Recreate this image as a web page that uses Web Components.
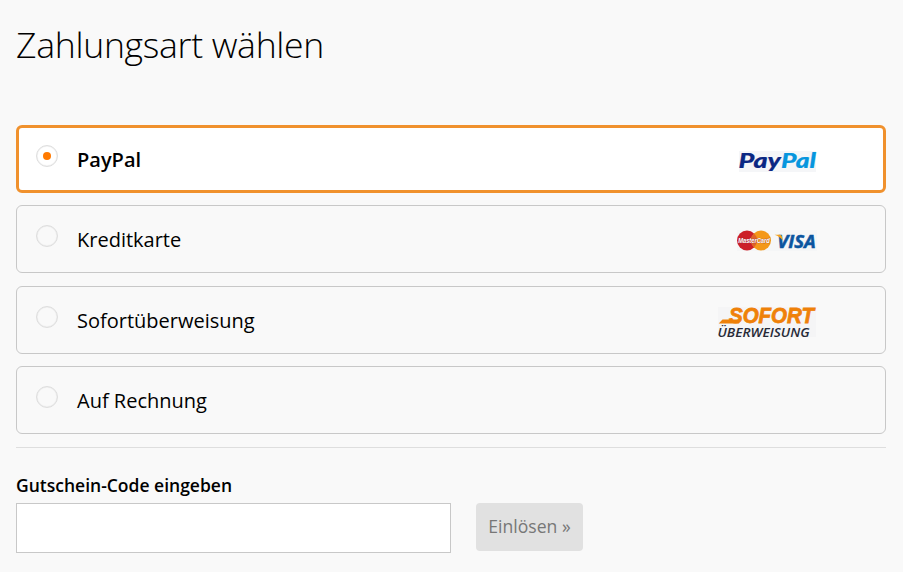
<!DOCTYPE html>
<html lang="de">
<head>
<meta charset="utf-8">
<title>Zahlungsart wählen</title>
<style>
html,body{margin:0;height:100%;background:#f9f9f9;overflow:hidden}
body{font-family:"Open Sans","Noto Sans",sans-serif;color:#000}
</style>
</head>
<body>
<payment-page></payment-page>
<script>
const shadow = (el, html) => { el.attachShadow({mode:"open"}).innerHTML = html; };

const logos = {
  paypal: `<svg width="99" height="32" viewBox="718 145 99 32">
    <path fill="#f5f6f8" d="M739 151h77v21h-77z"/>
    <g font-family="Lato,sans-serif" font-weight="900" font-style="italic" font-size="21.7" stroke-width=".2">
    <text x="738.5" y="168" fill="#0a2783" stroke="#0a2783" textLength="42.5" lengthAdjust="spacingAndGlyphs">Pay</text>
    <text x="781" y="168" fill="#0796de" stroke="#0796de" textLength="35" lengthAdjust="spacingAndGlyphs">Pal</text></g></svg>`,
  card: `<svg width="99" height="32" viewBox="718 225 99 32">
    <path fill="#f5f6f7" d="M737 230h80v21h-80z"/>
    <circle cx="747" cy="240.5" r="10" fill="#cc1f28"/>
    <circle cx="761" cy="240.5" r="10" fill="#f49819"/>
    <path d="M754 233.3a10 10 0 0 1 0 14.4a10 10 0 0 1 0-14.4z" fill="#df642a"/>
    <text x="738.2" y="243.3" fill="#fff" stroke="#983038" stroke-width=".5" paint-order="stroke" font-family="Liberation Sans,sans-serif" font-weight="700" font-style="italic" font-size="7.8" textLength="31.5" lengthAdjust="spacingAndGlyphs">MasterCard</text>
    <text x="777.2" y="247.6" fill="#0b559f" stroke="#0b559f" stroke-width=".5" font-family="Open Sans,sans-serif" font-weight="700" font-style="italic" font-size="17.4" textLength="38.5" lengthAdjust="spacingAndGlyphs">VISA</text>
    <path fill="#f3a21c" d="M774.5 234.8h5.2q2 0 2.3 2l.8 4q-2.5-4.2-8.3-6z"/></svg>`,
  sofort: `<svg width="99" height="40" viewBox="718 302 99 40">
    <path fill="#f5f5f6" d="M718 307h98v30h-98z"/>
    <text x="729" y="323.2" fill="#ef8109" stroke="#ef8109" stroke-width=".8" font-family="Liberation Sans,sans-serif" font-weight="700" font-style="italic" font-size="21.5" textLength="85" lengthAdjust="spacingAndGlyphs">SOFORT</text>
    <path fill="#ef8109" d="M722.5 319.4h18l-1.5 4.2h-20.3z"/>
    <text x="717.5" y="336.7" fill="#272a37" font-family="Open Sans,sans-serif" font-weight="600" font-style="italic" font-size="11.6" textLength="92" lengthAdjust="spacingAndGlyphs">ÜBERWEISUNG</text></svg>`
};

customElements.define("radio-mark", class extends HTMLElement {
  connectedCallback(){ shadow(this, `<style>
    :host{display:grid;place-items:center;box-sizing:border-box;width:22px;height:22px;border:1px solid #dedede;border-radius:50%;box-shadow:inset 0 0 1px #ccc}
    i{display:none;width:8px;height:8px;border-radius:50%;background:#ff7a00}
    :host([checked]) i{display:block}
    </style><i></i>`); }
});

customElements.define("brand-logo", class extends HTMLElement {
  connectedCallback(){ shadow(this, `<style>:host,svg{display:block;overflow:visible}:host([name=sofort]){margin-top:-4px}</style>${logos[this.getAttribute("name")] || ""}`); }
});

customElements.define("payment-option", class extends HTMLElement {
  connectedCallback(){
    const on = this.hasAttribute("selected"), logo = this.getAttribute("logo");
    shadow(this, `<style>
    :host{display:flex;align-items:flex-start;box-sizing:border-box;height:68px;padding:19px 68px 0 19px;border:1px solid #c8c8c8;border-radius:6px;font-size:20px;line-height:30px}
    :host([selected]){background:#fff;border:3px solid #f0912d;padding:17px 66px 0 17px;font-weight:600}
    span{flex:1;margin-left:19px}
    </style><radio-mark ${on ? "checked" : ""}></radio-mark><span><slot></slot></span>${logo ? `<brand-logo name="${logo}"></brand-logo>` : ""}`);
  }
});

customElements.define("voucher-form", class extends HTMLElement {
  connectedCallback(){ shadow(this, `<style>
    :host{display:block}
    label{display:block;font-weight:600;font-size:17.5px;line-height:24px;margin-bottom:6px}
    div{display:flex;gap:25px;align-items:flex-start}
    input{box-sizing:border-box;width:435px;height:50px;border:1px solid #c8c8c8;background:#fff;margin:0;padding:0 12px;font:inherit;border-radius:0}
    button{box-sizing:border-box;width:107px;height:48px;border:0;border-radius:4px;padding:0 0 2px;background:#e1e1e1;color:#777;font:17.6px "Open Sans","Noto Sans",sans-serif}
    </style><label for="code">Gutschein-Code eingeben</label><div><input id="code" type="text"><button>Einlösen »</button></div>`); }
});

customElements.define("payment-page", class extends HTMLElement {
  connectedCallback(){ shadow(this, `<style>
    :host{display:block;padding:19px 17px 0 16px}
    h1{margin:0 0 56px;height:50px;line-height:50px;font-size:35.6px;letter-spacing:-.3px;font-weight:300;white-space:nowrap}
    section{display:grid;gap:12.4px}
    hr{border:0;height:1px;background:#dedede;margin:12.8px 0 25px}
    </style><h1>Zahlungsart wählen</h1>
    <section>
      <payment-option selected logo="paypal">PayPal</payment-option>
      <payment-option logo="card">Kreditkarte</payment-option>
      <payment-option logo="sofort">Sofortüberweisung</payment-option>
      <payment-option>Auf Rechnung</payment-option>
    </section><hr><voucher-form></voucher-form>`); }
});
</script>
</body>
</html>
